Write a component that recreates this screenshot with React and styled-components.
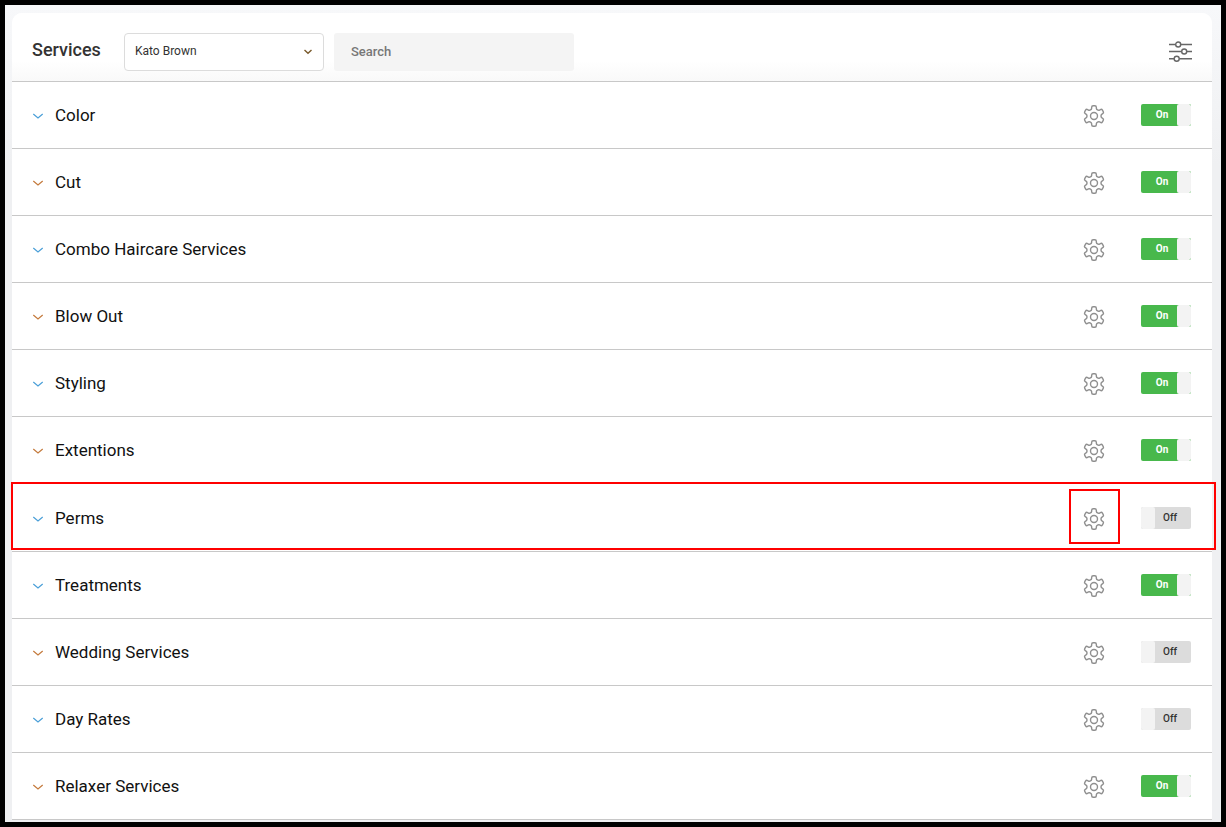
import React, { useState } from 'react';
import styled, { createGlobalStyle } from 'styled-components';

const GlobalStyle = createGlobalStyle`
  * {
    box-sizing: border-box;
  }

  body {
    margin: 0;
    font-family: Roboto, "Liberation Sans", sans-serif;
    color: #111;
  }
`;

const Page = styled.main`
  min-height: 100vh;
  padding: 8px 9px 2px 7px;
  border: 5px solid #000;
  background: linear-gradient(#f7f8fa, #eff0f2 160px);
`;

const Panel = styled.section`
  border-radius: 10px 10px 0 0;
  background: #fff;
`;

const Header = styled.header`
  display: flex;
  align-items: center;
  height: 69px;
  padding: 10px 20px 0;
  border-bottom: 1px solid #c8c8c8;
  border-radius: 10px 10px 0 0;
  background: linear-gradient(#fff 70%, #f9f9f9);
`;

const Title = styled.h1`
  width: 92px;
  margin: 0;
  padding-bottom: 4px;
  font-size: 18px;
  line-height: 24px;
  font-weight: 500;
  color: #333;
`;

const SelectBox = styled.div`
  position: relative;
  width: 200px;
  margin-right: 10px;
`;

const Select = styled.select`
  width: 100%;
  height: 38px;
  padding: 0 30px 2px 10px;
  border: 1px solid #dcdcdc;
  border-radius: 4px;
  appearance: none;
  background: #fff;
  font-family: inherit;
  font-size: 12px;
  color: #333;
`;

const SelectArrow = styled.svg`
  position: absolute;
  top: 16px;
  right: 11px;
  width: 10px;
  height: 6px;
  pointer-events: none;
`;

const Search = styled.input`
  width: 240px;
  height: 38px;
  padding: 0 17px 2px;
  border: 0;
  border-radius: 3px;
  background: #f4f4f4;
  font-family: inherit;
  font-size: 13px;
  font-weight: 500;

  &::placeholder {
    color: #777;
  }
`;

const IconButton = styled.button`
  display: flex;
  padding: 0;
  border: 0;
  background: none;
  cursor: pointer;
`;

const FilterButton = styled(IconButton)`
  margin-left: auto;
`;

const List = styled.ul`
  margin: 0;
  padding: 0;
  list-style: none;
`;

const Row = styled.li`
  position: relative;
  display: flex;
  align-items: center;
  height: ${(props) => (props.$marked ? 68 : 67)}px;
  padding: 0 21px 0 20px;
  border-bottom: 1px solid #c8c8c8;
`;

const RowMark = styled.div`
  position: absolute;
  inset: -2px -4px 1px -1px;
  border: 2px solid #f00;
  pointer-events: none;
`;

const GearMark = styled.div`
  position: absolute;
  inset: -17px -14px -14px -13px;
  border: 2px solid #f00;
  pointer-events: none;
`;

const Expand = styled(IconButton)`
  flex: 1;
  align-items: center;
  gap: 11px;
  font-family: inherit;
  font-size: 17px;
  line-height: 24px;
  color: #111;
  text-align: left;
`;

const Settings = styled(IconButton)`
  position: relative;
  margin-right: 35px;
`;

const Toggle = styled.label`
  position: relative;
  display: flex;
  width: 50px;
  height: 22px;
  border-radius: 2px;
  overflow: hidden;
  background: ${(props) => (props.$on ? '#48b84c' : '#dcdcdc')};
  font-size: 10px;
  line-height: 22px;
  font-weight: ${(props) => (props.$on ? 700 : 500)};
  color: ${(props) => (props.$on ? '#fff' : '#333')};
  cursor: pointer;
  flex-direction: ${(props) => (props.$on ? 'row' : 'row-reverse')};
`;

const ToggleInput = styled.input`
  position: absolute;
  inset: 0;
  margin: 0;
  opacity: 0;
  cursor: pointer;
`;

const ToggleText = styled.span`
  flex: 1;
  padding-left: ${(props) => (props.$on ? 6 : 0)}px;
  padding-right: ${(props) => (props.$on ? 0 : 6)}px;
  text-align: center;
`;

const ToggleKnob = styled.span`
  width: 14px;
  border-radius: 2px;
  background: #f3f3f3;
`;

const services = [
  { name: 'Color', on: true, tint: '#4a9fd8' },
  { name: 'Cut', on: true, tint: '#c47a3c' },
  { name: 'Combo Haircare Services', on: true, tint: '#4a9fd8' },
  { name: 'Blow Out', on: true, tint: '#c47a3c' },
  { name: 'Styling', on: true, tint: '#4a9fd8' },
  { name: 'Extentions', on: true, tint: '#c47a3c' },
  { name: 'Perms', on: false, tint: '#4a9fd8', marked: true },
  { name: 'Treatments', on: true, tint: '#4a9fd8' },
  { name: 'Wedding Services', on: false, tint: '#c47a3c' },
  { name: 'Day Rates', on: false, tint: '#4a9fd8' },
  { name: 'Relaxer Services', on: true, tint: '#c47a3c' },
];

const Chevron = ({ color }) => (
  <svg width="12" height="10" viewBox="0 0 12 10" fill="none" stroke={color} strokeWidth="1.2">
    <path d="M1.300 4l4.700 4 4.700-4" />
  </svg>
);

const FilterIcon = () => (
  <svg width="24" height="22" viewBox="0 0 24 22" fill="none" stroke="#666" strokeWidth="1.4">
    <path d="M1 3.500h6.500M12.700 3.500H24M1 10.500h12.500M18.700 10.500H24M1 17.800h5M11.200 17.800H24" />
    <circle cx="10.200" cy="3.500" r="2.500" />
    <circle cx="16.200" cy="10.500" r="2.500" />
    <circle cx="8.700" cy="17.800" r="2.500" />
  </svg>
);

const GearIcon = () => (
  <svg width="24" height="24" viewBox="0 0 24 24" fill="none" stroke="#8f8f8f" strokeWidth="1.4" strokeLinejoin="round">
    <path d="M9.671 5.136V4.300a1.500 1.500 0 0 1 1.500-1.500h1.659a1.500 1.500 0 0 1 1.500 1.500v.836a2.340 2.340 0 0 0 3.319 1.915l.724-.418a1.500 1.500 0 0 1 2.049.549l.830 1.437a1.500 1.500 0 0 1-.549 2.049l-.724.417a2.340 2.340 0 0 0 0 3.831l.724.418a1.500 1.500 0 0 1 .549 2.049l-.830 1.437a1.500 1.500 0 0 1-2.049.549l-.724-.418a2.340 2.340 0 0 0-3.319 1.915v.836a1.500 1.500 0 0 1-1.500 1.500h-1.659a1.500 1.500 0 0 1-1.500-1.500v-.836a2.340 2.340 0 0 0-3.319-1.915l-.724.418a1.500 1.500 0 0 1-2.049-.549l-.830-1.437a1.500 1.500 0 0 1 .549-2.049l.724-.418a2.340 2.340 0 0 0 0-3.831l-.724-.417a1.500 1.500 0 0 1-.549-2.049l.830-1.437a1.500 1.500 0 0 1 2.049-.549l.724.418a2.340 2.340 0 0 0 3.319-1.915z" />
    <circle cx="12" cy="13" r="3.500" />
  </svg>
);

const ServiceRow = ({ service }) => {
  const [on, setOn] = useState(service.on);

  return (
    <Row $marked={service.marked}>
      <Expand type="button">
        <Chevron color={service.tint} />
        {service.name}
      </Expand>
      <Settings type="button" aria-label={`${service.name} settings`}>
        <GearIcon />
        {service.marked && <GearMark />}
      </Settings>
      <Toggle $on={on}>
        <ToggleInput
          type="checkbox"
          aria-label={service.name}
          checked={on}
          onChange={() => setOn(!on)}
        />
        <ToggleText $on={on}>{on ? 'On' : 'Off'}</ToggleText>
        <ToggleKnob />
      </Toggle>
      {service.marked && <RowMark />}
    </Row>
  );
};

const App = () => {
  return (
    <>
      <GlobalStyle />
      <Page>
        <Panel>
          <Header>
            <Title>Services</Title>
            <SelectBox>
              <Select aria-label="Staff member">
                <option>Kato Brown</option>
              </Select>
              <SelectArrow viewBox="0 0 10 6" fill="none" stroke="#7a5a2c" strokeWidth="1.4">
                <path d="M1.500 1l3.500 3.300L8.500 1" />
              </SelectArrow>
            </SelectBox>
            <Search type="search" placeholder="Search" aria-label="Search" />
            <FilterButton type="button" aria-label="Filters">
              <FilterIcon />
            </FilterButton>
          </Header>
          <List>
            {services.map((service) => (
              <ServiceRow key={service.name} service={service} />
            ))}
          </List>
        </Panel>
      </Page>
    </>
  );
};

export default App;
